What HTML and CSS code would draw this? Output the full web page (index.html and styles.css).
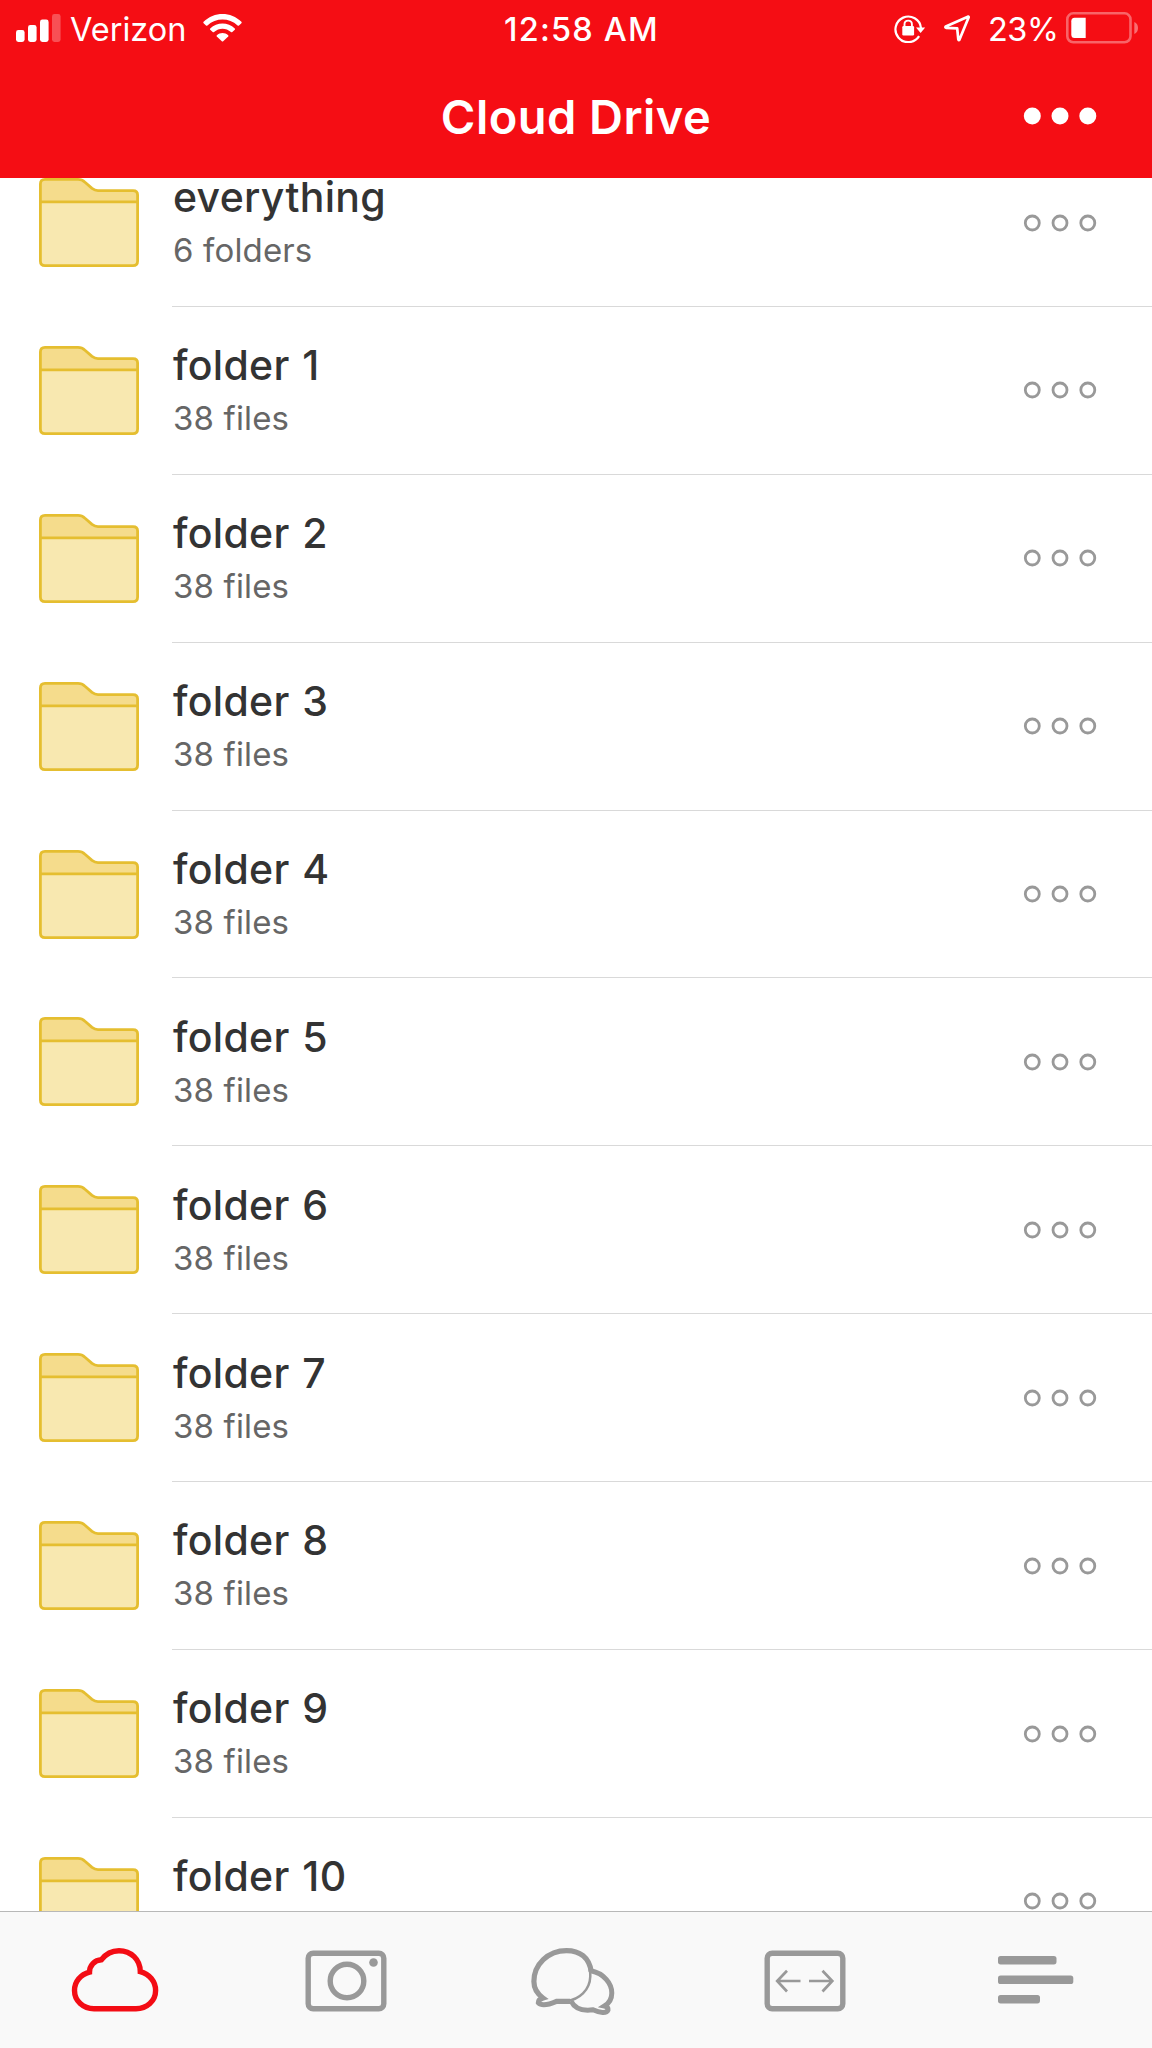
FILE: index.html
```html
<!DOCTYPE html>
<html lang="en">
<head>
<meta charset="utf-8">
<title>Cloud Drive</title>
<link rel="stylesheet" href="styles.css">
</head>
<body>
<svg class="defs" width="0" height="0" aria-hidden="true">
  <symbol id="folder" viewBox="0 0 100 89">
    <path d="M1.4 24V6Q1.4 1.4 6 1.4H39Q43 1.4 46 4.2L53 10.4Q56 12.6 59 12.6H94Q98.6 12.6 98.6 17V24Z" fill="#f5dc8c"/>
    <path d="M1.4 24H98.6V83Q98.6 87.6 94 87.6H6Q1.4 87.6 1.4 83Z" fill="#f8e8b0"/>
    <path d="M1.4 23.8H98.6M6 1.4H39Q43 1.4 46 4.2L53 10.4Q56 12.6 59 12.6H94Q98.6 12.6 98.6 17V83Q98.6 87.6 94 87.6H6Q1.4 87.6 1.4 83V6Q1.4 1.4 6 1.4Z" fill="none" stroke="#e5be30" stroke-width="2.8"/>
  </symbol>
  <symbol id="more" viewBox="0 0 74 18">
    <g fill="none" stroke="#999" stroke-width="2.8"><circle cx="9.3" cy="9" r="7"/><circle cx="37" cy="9" r="7"/><circle cx="64.8" cy="9" r="7"/></g>
  </symbol>
</svg>
<div class="screen">
  <header class="header">
    <div class="status">
      <div class="status-left">
        <svg class="signal" width="45" height="28" viewBox="0 0 45 28" fill="#fff"><rect y="16" width="8.6" height="12" rx="2.4"/><rect x="12" y="11" width="8.6" height="17" rx="2.4"/><rect x="24" y="5.5" width="8.6" height="22.5" rx="2.4"/><rect x="36" width="8.6" height="28" rx="2.4" opacity=".28"/></svg>
        <span class="carrier">Verizon</span>
        <svg class="wifi" width="39" height="28" viewBox="0 0 39 28" fill="#fff"><path d="M.6 7.8C11-2.6 28-2.6 38.4 7.8Q39 8.5 38.4 9.2L36 11.5Q35.3 12 34.6 11.4C26 3.5 13 3.5 4.4 11.4Q3.7 12 3 11.5L.6 9.2Q0 8.5 .6 7.8Z"/><path d="M7.2 14.4C14 7.9 25 7.9 31.8 14.4Q32.4 15 31.8 15.7L29.3 18.1Q28.7 18.6 28 18.1C23 13.6 16 13.6 11 18.1Q10.3 18.6 9.7 18.1L7.2 15.7Q6.6 15 7.2 14.4Z"/><path d="M13.8 21.2C17 18.4 22 18.4 25.2 21.2Q25.7 21.8 25.2 22.4L20.2 27.3Q19.5 27.9 18.8 27.3L13.8 22.4Q13.3 21.8 13.8 21.2Z"/></svg>
      </div>
      <span class="clock">12:58 AM</span>
      <div class="status-right">
        <svg class="lock" width="32" height="29" viewBox="0 0 32 29"><path d="M25.1 22.2A12.8 12.8 0 1 1 27 14" fill="none" stroke="#fff" stroke-width="2.2"/><path d="M22 13.5H31.2L26.6 19Z" fill="#fff"/><rect x="8.3" y="12" width="11.8" height="9.5" rx="1.2" fill="#fff"/><path d="M10.5 13V10.2Q10.5 6.6 14.2 6.6T17.9 10.2V13" fill="none" stroke="#fff" stroke-width="1.9"/></svg>
        <svg class="arrow" width="26" height="27" viewBox="0 0 26 27"><path d="M24.4 1.6L1.8 11.5Q.9 12.5 2 12.8L13.2 13.4L14.3 24.4Q14.7 25.7 15.5 24.6L24.7 2.2Z" fill="none" stroke="#fff" stroke-width="2.7" stroke-linejoin="round"/></svg>
        <span class="percent">23%</span>
        <svg class="battery" width="73" height="32" viewBox="0 0 73 32"><rect x="1.3" y="1.3" width="63.2" height="29" rx="6" fill="none" stroke="#fff" stroke-opacity=".36" stroke-width="2.6"/><path d="M8.5 5.8H19.7V26H8.5Q5.3 26 5.3 22.5V9.3Q5.3 5.8 8.5 5.8Z" fill="#fff"/><path d="M68.3 10Q72 11.7 72 16T68.3 22Z" fill="#fff" opacity=".4"/></svg>
      </div>
    </div>
    <div class="navbar">
      <h1 class="title">Cloud Drive</h1>
      <svg class="nav-more" width="74" height="18" viewBox="0 0 74 18" fill="#fff"><circle cx="9.3" cy="9" r="8.5"/><circle cx="37" cy="9" r="8.5"/><circle cx="64.8" cy="9" r="8.5"/></svg>
    </div>
  </header>
  <main class="list">
    <ul class="rows">
      <li class="row"><svg class="folder"><use href="#folder"/></svg><div class="info"><div class="text"><span class="name">everything</span><span class="meta">6 folders</span></div><svg class="more"><use href="#more"/></svg></div></li>
      <li class="row"><svg class="folder"><use href="#folder"/></svg><div class="info"><div class="text"><span class="name">folder 1</span><span class="meta">38 files</span></div><svg class="more"><use href="#more"/></svg></div></li>
      <li class="row"><svg class="folder"><use href="#folder"/></svg><div class="info"><div class="text"><span class="name">folder 2</span><span class="meta">38 files</span></div><svg class="more"><use href="#more"/></svg></div></li>
      <li class="row"><svg class="folder"><use href="#folder"/></svg><div class="info"><div class="text"><span class="name">folder 3</span><span class="meta">38 files</span></div><svg class="more"><use href="#more"/></svg></div></li>
      <li class="row"><svg class="folder"><use href="#folder"/></svg><div class="info"><div class="text"><span class="name">folder 4</span><span class="meta">38 files</span></div><svg class="more"><use href="#more"/></svg></div></li>
      <li class="row"><svg class="folder"><use href="#folder"/></svg><div class="info"><div class="text"><span class="name">folder 5</span><span class="meta">38 files</span></div><svg class="more"><use href="#more"/></svg></div></li>
      <li class="row"><svg class="folder"><use href="#folder"/></svg><div class="info"><div class="text"><span class="name">folder 6</span><span class="meta">38 files</span></div><svg class="more"><use href="#more"/></svg></div></li>
      <li class="row"><svg class="folder"><use href="#folder"/></svg><div class="info"><div class="text"><span class="name">folder 7</span><span class="meta">38 files</span></div><svg class="more"><use href="#more"/></svg></div></li>
      <li class="row"><svg class="folder"><use href="#folder"/></svg><div class="info"><div class="text"><span class="name">folder 8</span><span class="meta">38 files</span></div><svg class="more"><use href="#more"/></svg></div></li>
      <li class="row"><svg class="folder"><use href="#folder"/></svg><div class="info"><div class="text"><span class="name">folder 9</span><span class="meta">38 files</span></div><svg class="more"><use href="#more"/></svg></div></li>
      <li class="row"><svg class="folder"><use href="#folder"/></svg><div class="info"><div class="text"><span class="name">folder 10</span></div><svg class="more"><use href="#more"/></svg></div></li>
    </ul>
  </main>
  <nav class="tabs">
    <a class="tab tab-cloud"><svg width="88" height="66" viewBox="0 0 88 66"><path d="M23 60.700H65C75.800 60.700 84.600 53 84.600 42.500C84.600 33.500 78.300 26 69.300 23.700C69.300 11.500 60 2.700 48 2.700C40.500 2.700 34.500 6.300 30.500 11.700C23.500 12 18.500 17.500 18.500 24.200C9.800 26.500 3.500 33.500 3.500 42.500C3.500 53 12.300 60.700 23 60.700Z" fill="none" stroke="#f30c14" stroke-width="5.400"/></svg></a>
    <a class="tab tab-camera"><svg width="82" height="62" viewBox="0 0 82 62" fill="none" stroke="#999" stroke-width="5.400"><rect x="3.200" y="3.200" width="75.600" height="55.600" rx="5"/><circle cx="42" cy="31" r="16.800"/><circle cx="68.500" cy="12.500" r="4.300" fill="#999" stroke="none"/></svg></a>
    <a class="tab tab-chat"><svg width="84" height="68" viewBox="0 0 84 68" fill="none" stroke="#999"><path d="M60 22.800C73 25.500 80.800 35.500 80.800 45C80.800 51 78.500 55 73.500 58Q77.300 58.800 77 62C75.500 65.800 69 65 62 61.800C53 63 44 61.500 40 53" stroke-width="5"/><path d="M36 53C48 51.500 58.800 42.500 59.300 28.500Q59.400 24.500 58.600 21" stroke-width="2.500"/><path d="M60.200 23.500C58 9 48.500 2.600 35.500 2.600C17 2.600 2.900 16.500 2.900 33.500C2.900 40.500 6.500 46 12 50Q7.300 51.500 7.400 54.700C10.500 58 18 56.500 25.500 53.300H39" stroke-width="5.200"/></svg></a>
    <a class="tab tab-transfer"><svg width="82" height="62" viewBox="0 0 82 62" fill="none" stroke="#999"><rect x="3.200" y="3.200" width="75.600" height="55.600" rx="5" stroke-width="5.400"/><path d="M36.500 31H13M23 20.800L13.200 31L23 41.500M45 31H68.500M58.500 20.800L68.300 31L58.500 41.500" stroke-width="2.700"/></svg></a>
    <a class="tab tab-menu"><svg width="76" height="48" viewBox="0 0 76 48" fill="#999"><rect width="58.500" height="8.400" rx="2.600"/><rect y="19.600" width="75.300" height="8.400" rx="2.600"/><rect y="39" width="42" height="8.400" rx="2.600"/></svg></a>
  </nav>
</div>
</body>
</html>
```
FILE: styles.css
```css
* { box-sizing: border-box; }
body { margin: 0; background: #fff; font-family: Inter, "Liberation Sans", sans-serif; }
svg { display: block; flex: none; }
.defs { position: absolute; }
.screen { width: 1152px; height: 2048px; display: flex; flex-direction: column; overflow: hidden; }

.header { height: 178px; flex: none; background: #f50d14; color: #fff; }
.status { height: 58px; display: grid; grid-template-columns: 1fr auto 1fr; align-items: start; padding: 9px 13px 0 16px; font-size: 32.5px; line-height: 42px; white-space: nowrap; }
.status-left, .status-right { display: flex; align-items: flex-start; }
.status-right { justify-content: flex-end; }
.signal { margin-top: 5px; }
.carrier { margin-left: 9px; width: 116px; }
.wifi { margin: 5px 0 0 17px; }
.clock { margin-left: 8px; margin-right: 0; font-weight: 500; letter-spacing: 1.2px; }
.lock { margin-top: 5px; }
.arrow { margin: 6px 0 0 18px; }
.percent { margin-left: 18px; width: 69px; letter-spacing: -.5px; }
.battery { margin: 3px 0 0 9px; }
.navbar { height: 120px; display: grid; grid-template-columns: 1fr auto 1fr; padding: 29px 55px 0; }
.title { grid-column: 2; margin: 0; font-size: 47px; font-weight: 600; line-height: 60px; letter-spacing: .45px; }
.nav-more { justify-self: end; margin-top: 20px; }

.list { flex: 1; min-height: 0; overflow: hidden; }
.rows { list-style: none; margin: -39px 0 0; padding: 0; }
.row { height: 167.9px; display: flex; padding-left: 39px; }
.folder { width: 100px; height: 89px; margin-top: 39px; }
.info { flex: 1; display: flex; justify-content: space-between; margin-left: 33px; border-bottom: 1px solid #d9d9d9; padding-right: 55px; }
.text { display: flex; flex-direction: column; padding: 34.3px 0 0 1px; }
.name { font-size: 41px; font-weight: 500; line-height: 48px; letter-spacing: .3px; word-spacing: 1.5px; color: #333; }
.meta { margin-top: 9px; font-size: 33px; line-height: 40px; letter-spacing: .15px; color: #666; }
.more { width: 74px; height: 18px; margin-top: 74.5px; }

.tabs { height: 137px; flex: none; display: grid; grid-template-columns: repeat(5, 1fr); justify-items: center; background: #f9f9f9; border-top: 1px solid #b8b8b8; }
.tab-cloud { padding-top: 36px; }
.tab-camera { padding-top: 38px; }
.tab-chat { padding: 36px 5px 0 0; }
.tab-transfer { padding: 38px 2px 0 0; }
.tab-menu { padding: 44px 2px 0 0; }
```
